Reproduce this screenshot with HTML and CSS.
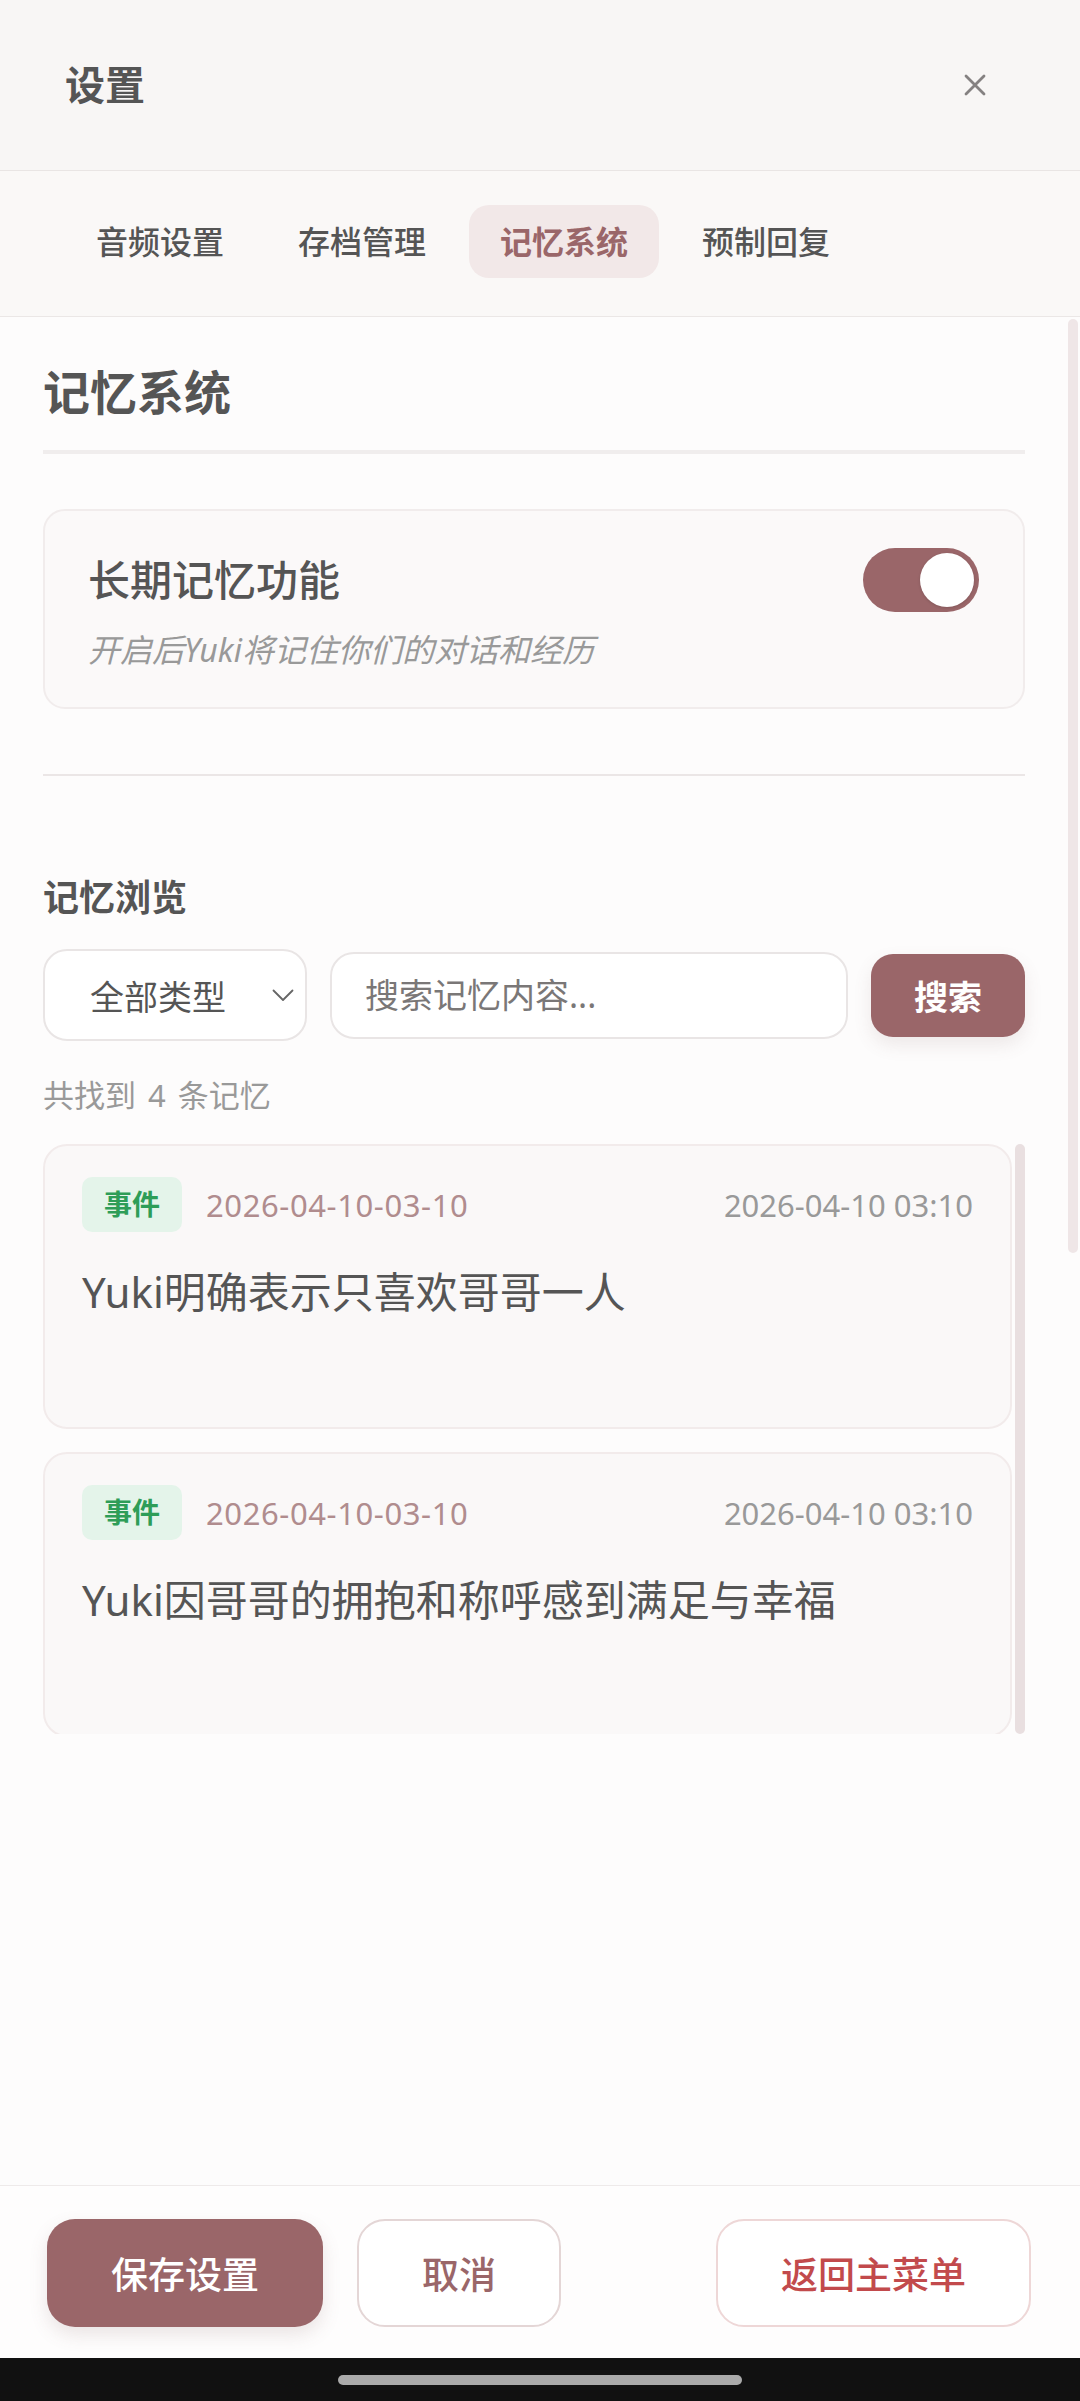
FILE: index.html
```html
<!DOCTYPE html>
<html lang="zh-CN">
<head>
<meta charset="utf-8">
<title>设置</title>
<link rel="stylesheet" href="styles.css">
</head>
<body>
<div class="app">
  <header class="topbar">
    <h1 class="title">设置</h1>
    <button class="close" aria-label="关闭">
      <svg width="22" height="22" viewBox="0 0 22 22"><path d="M2 2 L20 20 M20 2 L2 20" stroke="#858181" stroke-width="2.8" stroke-linecap="round" fill="none"/></svg>
    </button>
  </header>
  <nav class="tabs">
    <span class="tab">音频设置</span>
    <span class="tab">存档管理</span>
    <span class="tab active">记忆系统</span>
    <span class="tab">预制回复</span>
  </nav>
  <main class="content">
    <div class="panel">
      <h2 class="section-title">记忆系统</h2>
      <div class="toggle-card">
        <div class="toggle-row">
          <span class="toggle-label">长期记忆功能</span>
          <span class="switch"><span class="knob"></span></span>
        </div>
        <p class="toggle-desc">开启后Yuki将记住你们的对话和经历</p>
      </div>
      <div class="divider"></div>
      <h3 class="sub-title">记忆浏览</h3>
      <div class="search-row">
        <div class="select">
          <span>全部类型</span>
          <svg class="chev" width="22" height="13" viewBox="0 0 22 13"><path d="M1.5 1.5 L11 11 L20.5 1.5" stroke="#666" stroke-width="1.8" fill="none" stroke-linecap="round" stroke-linejoin="round"/></svg>
        </div>
        <input class="search-input" type="text" placeholder="搜索记忆内容...">
        <button class="search-btn">搜索</button>
      </div>
      <p class="count">共找到 4 条记忆</p>
      <div class="list-wrap">
        <div class="list">
          <div class="mem-card">
            <div class="mem-head">
              <span class="badge">事件</span>
              <span class="mem-id">2026-04-10-03-10</span>
              <span class="mem-time">2026-04-10 03:10</span>
            </div>
            <p class="mem-text">Yuki明确表示只喜欢哥哥一人</p>
          </div>
          <div class="mem-card">
            <div class="mem-head">
              <span class="badge">事件</span>
              <span class="mem-id">2026-04-10-03-10</span>
              <span class="mem-time">2026-04-10 03:10</span>
            </div>
            <p class="mem-text">Yuki因哥哥的拥抱和称呼感到满足与幸福</p>
          </div>
        </div>
        <div class="list-scroll"></div>
      </div>
    </div>
    <div class="gutter"><div class="thumb"></div></div>
  </main>
  <footer class="actions">
    <button class="btn btn-save">保存设置</button>
    <button class="btn btn-cancel">取消</button>
    <button class="btn btn-menu">返回主菜单</button>
  </footer>
  <div class="sysbar"><span class="home"></span></div>
</div>
</body>
</html>
```

FILE: styles.css
```css
* { box-sizing: border-box; }
html, body { margin: 0; padding: 0; }
body {
  width: 1080px;
  height: 2401px;
  overflow: hidden;
  font-family: "Noto Sans", "Noto Sans CJK SC", sans-serif;
  color: #555;
  background: #fdfcfc;
}
.app {
  height: 2401px;
  display: flex;
  flex-direction: column;
}
.topbar {
  height: 171px;
  flex: none;
  display: flex;
  align-items: center;
  justify-content: space-between;
  padding: 0 94px 0 65px;
  background: #f8f6f5;
  border-bottom: 1px solid #e9e5e4;
}
.title {
  margin: 0;
  font-size: 40px;
  font-weight: 700;
  line-height: 56px;
  color: #555;
}
.close {
  border: 0;
  background: none;
  padding: 0;
  width: 22px;
  height: 22px;
  display: flex;
}
.tabs {
  flex: none;
  display: flex;
  gap: 12px;
  padding: 34px 0 38px 65px;
  background: #faf8f7;
  border-bottom: 1px solid #ebe7e6;
}
.tab {
  font-size: 32px;
  font-weight: 500;
  line-height: 49px;
  padding: 12px 31px;
  border-radius: 20px;
  color: #555;
}
.tab.active {
  background: #f2e8e8;
  color: #9a6669;
  font-weight: 700;
}
.content {
  flex: 1;
  display: flex;
  overflow: hidden;
  background: #fdfcfc;
}
.panel {
  width: 982px;
  margin-left: 43px;
  padding-top: 45px;
  flex: none;
}
.gutter {
  margin-left: 43px;
  padding-top: 2px;
}
.thumb {
  width: 10px;
  height: 934px;
  border-radius: 5px;
  background: #efe6e7;
}
.section-title {
  margin: 0;
  font-size: 47px;
  line-height: 60px;
  font-weight: 700;
  padding-bottom: 28px;
  border-bottom: 4px solid #f0eded;
}
.toggle-card {
  margin-top: 55px;
  padding: 37px 44px 36px 43px;
  border: 2px solid #f1ecec;
  border-radius: 22px;
  background: #fbf9f9;
}
.toggle-row {
  display: flex;
  align-items: center;
  justify-content: space-between;
}
.toggle-label {
  font-size: 42px;
  font-weight: 500;
  line-height: 64px;
}
.switch {
  width: 116px;
  height: 64px;
  border-radius: 32px;
  background: #9a6669;
  display: flex;
  justify-content: flex-end;
  align-items: center;
  padding: 5px;
}
.knob {
  width: 54px;
  height: 54px;
  border-radius: 50%;
  background: #fff;
  box-shadow: 0 1px 3px rgba(0,0,0,0.15);
}
.toggle-desc {
  margin: 17px 0 0;
  font-size: 32px;
  line-height: 42px;
  font-style: italic;
  color: #999;
}
.divider {
  margin-top: 65px;
  height: 2px;
  background: #ebe6e6;
}
.sub-title {
  margin: 97px 0 0;
  font-size: 36px;
  line-height: 50px;
  font-weight: 700;
}
.search-row {
  margin-top: 26px;
  display: flex;
  align-items: center;
  gap: 23px;
}
.select {
  width: 264px;
  height: 92px;
  flex: none;
  display: flex;
  align-items: center;
  padding: 0 11px 0 45px;
  border: 2px solid #e9e5e5;
  border-radius: 24px;
  background: #fff;
  font-size: 34px;
  color: #555;
}
.chev { margin-left: auto; }
.search-input {
  width: 518px;
  height: 87px;
  flex: none;
  border: 2px solid #e9e5e5;
  border-radius: 24px;
  background: #fff;
  padding: 0 0 0 33px;
  font-family: "Noto Sans", "Noto Sans CJK SC", sans-serif;
  font-size: 34px;
  color: #555;
  outline: none;
}
.search-input::placeholder { color: #7a7777; }
.search-btn {
  width: 154px;
  height: 83px;
  flex: none;
  border: 0;
  border-radius: 22px;
  background: #9a6669;
  color: #fff;
  font-family: "Noto Sans", "Noto Sans CJK SC", sans-serif;
  font-size: 34px;
  font-weight: 700;
  box-shadow: 0 8px 18px rgba(120, 90, 90, 0.12);
}
.count {
  margin: 35px 0 0;
  font-size: 31px;
  line-height: 39px;
  word-spacing: 4px;
  color: #999;
}
.list-wrap {
  margin-top: 29px;
  height: 590px;
  display: flex;
  gap: 3px;
}
.list {
  width: 969px;
  flex: none;
  overflow: hidden;
  display: flex;
  flex-direction: column;
  gap: 23px;
}
.list-scroll {
  width: 10px;
  height: 590px;
  border-radius: 5px;
  background: #e9dfe0;
}
.mem-card {
  flex: none;
  height: 285px;
  padding: 31px 37px 0 37px;
  border: 2px solid #f2ebeb;
  border-radius: 24px;
  background: #faf8f8;
}
.mem-head {
  display: flex;
  align-items: center;
}
.badge {
  height: 55px;
  line-height: 55px;
  padding: 0 22px;
  border-radius: 10px;
  background: #e4f4ea;
  color: #2e9d58;
  font-size: 28px;
  font-weight: 700;
}
.mem-id {
  margin-left: 24px;
  font-size: 31px;
  color: #b08c8e;
  letter-spacing: 0.6px;
}
.mem-time {
  margin-left: auto;
  font-size: 31px;
  color: #999;
}
.mem-text {
  margin: 30px 0 0;
  font-size: 42px;
  line-height: 60px;
  color: #555;
}
.actions {
  height: 173px;
  flex: none;
  display: flex;
  align-items: flex-start;
  padding: 33px 49px 0 47px;
  border-top: 1px solid #eeeaea;
  background: #fefdfd;
}
.btn {
  height: 108px;
  font-family: "Noto Sans", "Noto Sans CJK SC", sans-serif;
  font-size: 37px;
  font-weight: 500;
  border-radius: 28px;
  background: #fff;
}
.btn-save {
  width: 276px;
  border: 0;
  background: #9a6669;
  color: #fff;
  box-shadow: 0 8px 18px rgba(120, 90, 90, 0.15);
}
.btn-cancel {
  width: 204px;
  margin-left: 34px;
  border: 2px solid #e4d6d6;
  color: #9a6669;
}
.btn-menu {
  width: 315px;
  margin-left: auto;
  border: 2px solid #eed7d7;
  color: #c24a4c;
}
.sysbar {
  height: 43px;
  flex: none;
  background: #111;
  display: flex;
  justify-content: center;
  padding-top: 17px;
}
.home {
  width: 404px;
  height: 10px;
  border-radius: 5px;
  background: #aaa;
}
```
